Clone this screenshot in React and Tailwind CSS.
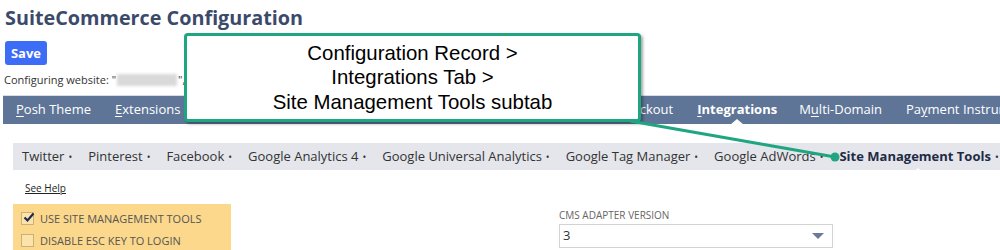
import React from "react";

const subTabs = [
  "Twitter",
  "Pinterest",
  "Facebook",
  "Google Analytics 4",
  "Google Universal Analytics",
  "Google Tag Manager",
  "Google AdWords",
];

export default function App() {
  return (
    <div className="relative w-[1000px] h-[250px] overflow-hidden bg-white font-['Open_Sans',sans-serif] text-[#333]">
      {/* Title */}
      <div className="h-[36px] flex items-center pl-[5px]">
        <h1 className="text-[19.8px] font-bold text-[#3b4a6b] leading-none">
          SuiteCommerce Configuration
        </h1>
      </div>

      {/* Save */}
      <div className="mt-[5px] pl-[5px]">
        <button className="h-[24px] w-[42px] rounded-[3px] bg-[#3d6cf7] text-white text-[13px] font-bold leading-none flex items-center justify-center">
          Save
        </button>
      </div>

      {/* Configuring website */}
      <div className="mt-[7px] h-[16px] pl-[4px] flex items-center text-[11px] text-[#333]">
        <span>Configuring website: "</span>
        <span className="inline-block w-[60px] h-[12px] bg-[#d9d9d9] blur-[1.5px] mx-[1px]" />
        <span>", do</span>
      </div>

      {/* Main nav */}
      <div className="mt-[7px] ml-[3px] border-t border-[#d8dce4]">
        <div className="relative h-[28px] bg-[#5f7597] flex items-center pl-[13px] text-[13px] text-white whitespace-nowrap">
          <span>
            <span className="underline underline-offset-2">P</span>osh Theme
          </span>
          <span className="ml-[24px]">
            <span className="underline underline-offset-2">E</span>xtensions
          </span>
          <span className="ml-auto">ckout</span>
          <span className="relative ml-[24px] font-bold">
            <span className="underline underline-offset-2">I</span>ntegrations
            <span className="absolute left-1/2 -translate-x-1/2 top-[19px] w-0 h-0 border-l-[7px] border-r-[7px] border-b-[6px] border-l-transparent border-r-transparent border-b-white" />
          </span>
          <span className="ml-[22px]">
            M<span className="underline underline-offset-2">u</span>lti-Domain
          </span>
          <span className="ml-[24px] w-[94px] overflow-hidden">
            Pa<span className="underline underline-offset-2">y</span>ment Instruments
          </span>
        </div>
      </div>

      {/* Sub tabs */}
      <div className="mt-[19px] ml-[13px] h-[27px] bg-[#e4e6ec] flex items-center pl-[9px] gap-[16px] text-[13px] text-[#333] whitespace-nowrap">
        {subTabs.map((t) => (
          <span key={t}>
            {t}
            <span className="ml-[4px] text-[10px]">•</span>
          </span>
        ))}
        <span className="relative font-bold text-[#1f2b45]">
          Site Management Tools
          <span className="ml-[4px] text-[10px] font-normal">•</span>
          <span className="absolute left-[72px] top-[21px] w-0 h-0 border-l-[7px] border-r-[7px] border-b-[6px] border-l-transparent border-r-transparent border-b-white" />
        </span>
      </div>

      {/* See Help */}
      <div className="mt-[11px] h-[14px] pl-[25px] flex items-center">
        <span className="text-[10px] underline text-[#222]">See Help</span>
      </div>

      {/* Fields */}
      <div className="mt-[9px] flex">
        <div className="ml-[13px] w-[218px] h-[60px] bg-[#fbd88c] pt-[3px] pl-[8px] text-[11px] text-[#555]">
          <div className="h-[22px] flex items-center gap-[6px]">
            <span className="relative w-[13px] h-[13px] border border-[#c9b27a] bg-[#fbe3ab] flex items-center justify-center">
              <svg width="12" height="11" viewBox="0 0 12 11" className="absolute -top-[1px] left-[1px]">
                <path d="M1.5 5.5 L4.5 8.5 L10.5 1.5" stroke="#1e2a4a" strokeWidth="2.2" fill="none" />
              </svg>
            </span>
            <span className="leading-none">USE SITE MANAGEMENT TOOLS</span>
          </div>
          <div className="h-[22px] flex items-center gap-[6px]">
            <span className="w-[13px] h-[13px] border border-[#c9b27a] bg-[#fbe3ab]" />
            <span className="leading-none">DISABLE ESC KEY TO LOGIN</span>
          </div>
        </div>
        <div className="ml-[328px] pt-[6px]">
          <div className="text-[10px] text-[#666] leading-none h-[12px]">CMS ADAPTER VERSION</div>
          <div className="mt-[2px] w-[274px] h-[24px] border border-[#d3d3d3] flex items-center justify-between pl-[3px] pr-[8px] text-[13px] text-[#333]">
            <span>3</span>
            <span className="w-0 h-0 border-l-[6px] border-r-[6px] border-t-[6px] border-l-transparent border-r-transparent border-t-[#6b7a96]" />
          </div>
        </div>
      </div>

      {/* Callout */}
      <div className="absolute left-[184px] top-[33px] w-[457px] h-[89px] bg-white border-[3px] border-[#1fa57f] rounded-[4px] shadow-[2px_2px_3px_rgba(0,0,0,0.35)] flex flex-col items-center justify-center font-['Liberation_Sans',Arial,sans-serif] text-[20.4px] leading-[24.5px] text-black">
        <div>Configuration Record &gt;</div>
        <div>Integrations Tab &gt;</div>
        <div>Site Management Tools subtab</div>
      </div>

      {/* Arrow */}
      <svg className="absolute left-0 top-0 pointer-events-none" width="1000" height="250">
        <line x1="630" y1="121" x2="835" y2="157" stroke="#1fa57f" strokeWidth="3" />
        <circle cx="835" cy="157" r="4.5" fill="#1fa57f" />
      </svg>
    </div>
  );
}
